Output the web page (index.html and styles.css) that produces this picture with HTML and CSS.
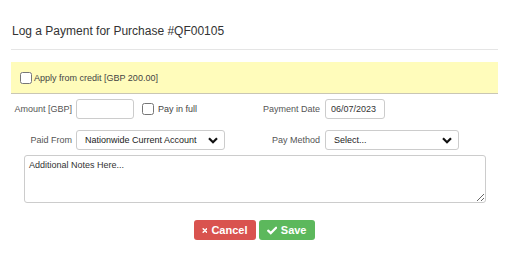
FILE: index.html
```html
<!DOCTYPE html>
<html lang="en">
<head>
  <meta charset="UTF-8">
  <title>Log a Payment</title>
  <link rel="stylesheet" href="styles.css">
</head>
<body>
  <div class="modal">
    <div class="modal-header">
      <h4>Log a Payment for Purchase #QF00105</h4>
    </div>

    <div class="credit-band">
      <label class="check"><input type="checkbox">Apply from credit [GBP 200.00]</label>
    </div>

    <div class="form-grid">
      <label class="lbl">Amount [GBP]</label>
      <div class="field">
        <input type="text" class="input amount">
        <label class="check pay-full"><input type="checkbox">Pay in full</label>
      </div>
      <label class="lbl">Payment Date</label>
      <div class="field">
        <input type="text" class="input date" value="06/07/2023">
      </div>

      <label class="lbl">Paid From</label>
      <div class="field">
        <div class="select wide">
          <span>Nationwide Current Account</span>
          <svg class="chev" viewBox="0 0 10 7" width="10" height="7"><path d="M1 1.2 L5 5.2 L9 1.2" fill="none" stroke="#111" stroke-width="2.2"/></svg>
        </div>
      </div>
      <label class="lbl">Pay Method</label>
      <div class="field">
        <div class="select method">
          <span>Select...</span>
          <svg class="chev" viewBox="0 0 10 7" width="10" height="7"><path d="M1 1.2 L5 5.2 L9 1.2" fill="none" stroke="#111" stroke-width="2.2"/></svg>
        </div>
      </div>
    </div>

    <textarea class="notes" placeholder="Additional Notes Here..."></textarea>

    <div class="actions">
      <button class="btn btn-cancel">
        <svg viewBox="0 0 10 10" width="9" height="9"><path d="M2 2 L8 8 M8 2 L2 8" stroke="#fff" stroke-width="2.6" stroke-linecap="round"/></svg>
        Cancel
      </button>
      <button class="btn btn-save">
        <svg viewBox="0 0 12 10" width="11" height="9"><path d="M1.4 5.2 L4.4 8 L10.6 1.8" fill="none" stroke="#fff" stroke-width="2.6" stroke-linecap="round"/></svg>
        Save
      </button>
    </div>
  </div>
</body>
</html>
```

FILE: styles.css
```css
body {
  margin: 0;
  font-family: "Liberation Sans", Arial, sans-serif;
  color: #333;
  background: #fff;
}

.modal {
  padding: 0 10px 0 11px;
}

.modal-header {
  padding: 24px 0 11px 1px;
  border-bottom: 1px solid #e5e5e5;
}

.modal-header h4 {
  margin: 0;
  font-size: 12px;
  font-weight: normal;
  line-height: 14px;
  color: #333;
}

.credit-band {
  margin-top: 12px;
  height: 31px;
  background: #fffcbb;
  border-bottom: 1px solid #c9c6b4;
  display: flex;
  align-items: center;
  padding-left: 9px;
}

.check {
  display: flex;
  align-items: center;
  font-size: 9px;
  color: #444;
  white-space: nowrap;
}

.check input {
  margin: 0 2px 0 0;
  width: 12px;
  height: 12px;
}

.form-grid {
  display: grid;
  grid-template-columns: 61px 176px 64px 1fr;
  column-gap: 4px;
  row-gap: 11px;
  align-items: center;
  padding-top: 5px;
}

.lbl {
  text-align: right;
  font-size: 9px;
  color: #555;
  white-space: nowrap;
}

.field {
  display: flex;
  align-items: center;
}

.input {
  box-sizing: border-box;
  height: 20px;
  border: 1px solid #ccc;
  border-radius: 3px;
  font-family: inherit;
  font-size: 9px;
  color: #333;
  padding: 0 5px;
  outline: none;
}

.amount {
  width: 58px;
}

.date {
  width: 60px;
  margin-left: 1px;
}

.pay-full {
  margin-left: 8px;
}

.pay-full input {
  margin-right: 4px;
}

.select {
  box-sizing: border-box;
  height: 20px;
  border: 1px solid #ccc;
  border-radius: 3px;
  display: flex;
  align-items: center;
  justify-content: space-between;
  padding: 0 6px 0 8px;
  font-size: 9px;
  color: #222;
  white-space: nowrap;
}

.wide {
  width: 149px;
}

.method {
  width: 134px;
  margin-left: 1px;
}

.notes {
  display: block;
  box-sizing: border-box;
  width: 462px;
  height: 48px;
  margin: 5px 0 0 13px;
  border: 1px solid #ccc;
  border-radius: 3px;
  padding: 4px;
  font-family: inherit;
  font-size: 9px;
  resize: vertical;
}

.notes::placeholder {
  color: #333;
}

.actions {
  display: flex;
  justify-content: center;
  gap: 3px;
  margin-top: 17px;
  margin-left: -1px;
}

.btn {
  display: flex;
  align-items: center;
  gap: 4px;
  height: 20px;
  border: none;
  border-radius: 3px;
  color: #fff;
  font-family: "Liberation Sans", Arial, sans-serif;
  font-weight: bold;
  font-size: 11px;
  padding: 0 8px;
}

.btn-cancel {
  background: #d9534f;
  width: 62px;
}

.btn-save {
  background: #5cb85c;
  width: 56px;
}
```
